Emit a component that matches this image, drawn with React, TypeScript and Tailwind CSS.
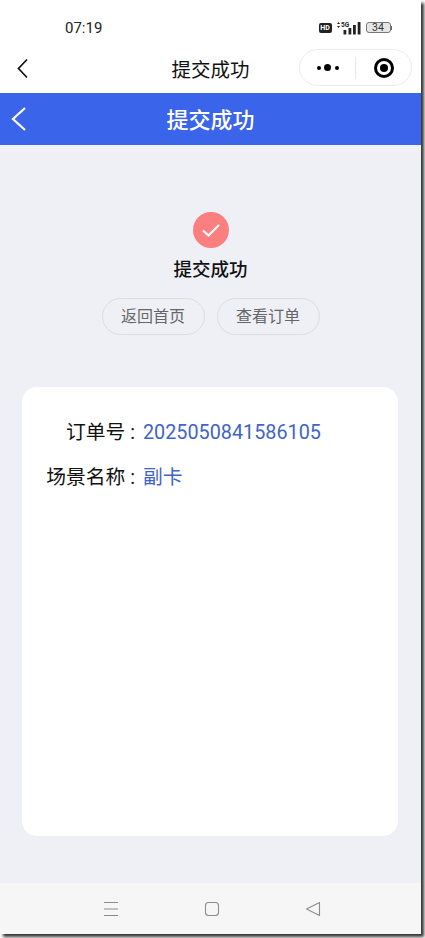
const cjk = "font-['Noto_Sans_CJK_SC','Noto_Sans',sans-serif]";

function StatusBar() {
  return (
    <div className="h-[47px] flex items-center justify-between pt-[8px] pl-[65px] pr-[29px]">
      <span className="font-['Roboto',sans-serif] text-[15px] leading-[18px] text-[#222]">07:19</span>
      <div className="flex items-center gap-[5px] text-[#333]">
        <span className="w-[13px] h-[10px] rounded-[2px] bg-[#222] text-white text-[7px] leading-[10px] font-bold text-center font-['Roboto',sans-serif]">HD</span>
        <svg width="24" height="14" viewBox="0 0 24 14" fill="#222">
          <path d="M0 3l1.5-2L3 3zM0 5h3L1.5 7z" />
          <rect x="6.5" y="9" width="2.8" height="4.5" />
          <rect x="11.5" y="7" width="2.8" height="6.5" />
          <rect x="16" y="4" width="2.8" height="9.5" />
          <rect x="20.7" y="1" width="2.8" height="12.5" />
          <text x="4" y="6" fontSize="6.5" fontWeight="700" fontFamily="Roboto">5G</text>
        </svg>
        <span className="flex items-center">
          <span className="w-[25px] h-[11px] rounded-[3px] border border-[#777] bg-[#e6e6e6] text-[10.5px] leading-[9px] text-center text-[#333] font-['Roboto',sans-serif]">34</span>
          <span className="w-[1.5px] h-[4px] bg-[#666]" />
        </span>
      </div>
    </div>
  );
}

function MiniNav() {
  return (
    <div className="relative h-[46px] flex items-center justify-center">
      <svg className="absolute left-[16px] top-[11px]" width="13" height="21" viewBox="0 0 13 21" fill="none" stroke="#111" strokeWidth="1.7">
        <path d="M11 1.5L2.5 10.5L11 19.5" />
      </svg>
      <span className={`${cjk} text-[19.5px] leading-[28px] text-[#111] mb-[2px]`}>提交成功</span>
      <div className="absolute left-[299px] top-[2px] w-[113px] h-[37px] rounded-full border border-[#ececec] flex items-center">
        <div className="w-[55px] flex items-center justify-center gap-[3.5px]">
          <span className="w-[4px] h-[4px] rounded-full bg-black" />
          <span className="w-[7px] h-[7px] rounded-full bg-black" />
          <span className="w-[4px] h-[4px] rounded-full bg-black" />
        </div>
        <span className="w-px h-[22px] bg-[#e8e8e8]" />
        <div className="flex-1 flex items-center justify-center">
          <span className="w-[20px] h-[20px] rounded-full border-[3px] border-black flex items-center justify-center">
            <span className="w-[8px] h-[8px] rounded-full bg-black" />
          </span>
        </div>
      </div>
    </div>
  );
}

function Row({ label, value }: { label: string; value: string }) {
  return (
    <div className="flex h-[45px] items-center">
      <span className="w-[121px] pr-[3px] text-right text-[#111] text-[19.8px] leading-[26px] whitespace-pre font-['Roboto','Noto_Sans_CJK_SC',sans-serif]">{label}</span>
      <span className="text-[#3f64c4] text-[19.8px] leading-[26px] font-['Roboto','Noto_Sans_CJK_SC',sans-serif]">{value}</span>
    </div>
  );
}

export default function App() {
  return (
    <div className="w-[425px] h-[938px] bg-white overflow-hidden">
      <div className="w-[421px] h-[934px] flex flex-col bg-white shadow-[3px_3px_3px_rgba(0,0,0,0.8)]">
        <StatusBar />
        <MiniNav />
        <div className="h-[52px] bg-[#3a64ea] relative flex items-center justify-center">
          <svg className="absolute left-[10px] top-[13px]" width="17" height="26" viewBox="0 0 17 26" fill="none" stroke="#fff" strokeWidth="2.2">
            <path d="M15 2L3 13L15 24" />
          </svg>
          <span className={`${cjk} text-white text-[22px] leading-[30px] font-medium mb-[3px]`}>提交成功</span>
        </div>
        <div className="flex-1 bg-[#eff0f6] flex flex-col items-center pt-[67px]">
          <div className="w-[36px] h-[36px] rounded-full bg-[#fc7f80] flex items-center justify-center">
            <svg width="20" height="16" viewBox="0 0 20 16" fill="none" stroke="#fff" strokeWidth="2.2">
              <path d="M2 8.5L7.5 13.5L18 3" />
            </svg>
          </div>
          <p className={`${cjk} mt-[7px] text-[18.5px] leading-[26px] font-medium text-[#111]`}>提交成功</p>
          <div className="mt-[17px] flex gap-[12px]">
            <span className={`${cjk} w-[103px] h-[37px] rounded-full border border-[#dcdde3] text-[16px] leading-[33px] text-center text-[#666]`}>返回首页</span>
            <span className={`${cjk} w-[103px] h-[37px] rounded-full border border-[#dcdde3] text-[16px] leading-[33px] text-center text-[#666]`}>查看订单</span>
          </div>
          <div className="mt-[52px] self-start ml-[22px] w-[376px] h-[449px] bg-white rounded-[15px] pt-[23px]">
            <Row label="订单号 : " value="2025050841586105" />
            <Row label="场景名称 : " value="副卡" />
          </div>
        </div>
        <div className="h-[51px] bg-[#f6f6f6] flex items-center justify-center gap-[85px] pl-[3px]">
          <svg width="16" height="16" viewBox="0 0 16 16" fill="none" stroke="#8c8c8c" strokeWidth="1.1">
            <path d="M1 1.5h14M1 8h14M1 14.5h14" />
          </svg>
          <svg width="16" height="16" viewBox="0 0 16 16" fill="none" stroke="#8c8c8c" strokeWidth="1.1">
            <rect x="1.5" y="1.5" width="13" height="13" rx="3" />
          </svg>
          <svg width="16" height="16" viewBox="0 0 16 16" fill="none" stroke="#8c8c8c" strokeWidth="1.1">
            <path d="M14.5 1.5V14.5L1.5 8Z" strokeLinejoin="round" />
          </svg>
        </div>
      </div>
    </div>
  );
}
